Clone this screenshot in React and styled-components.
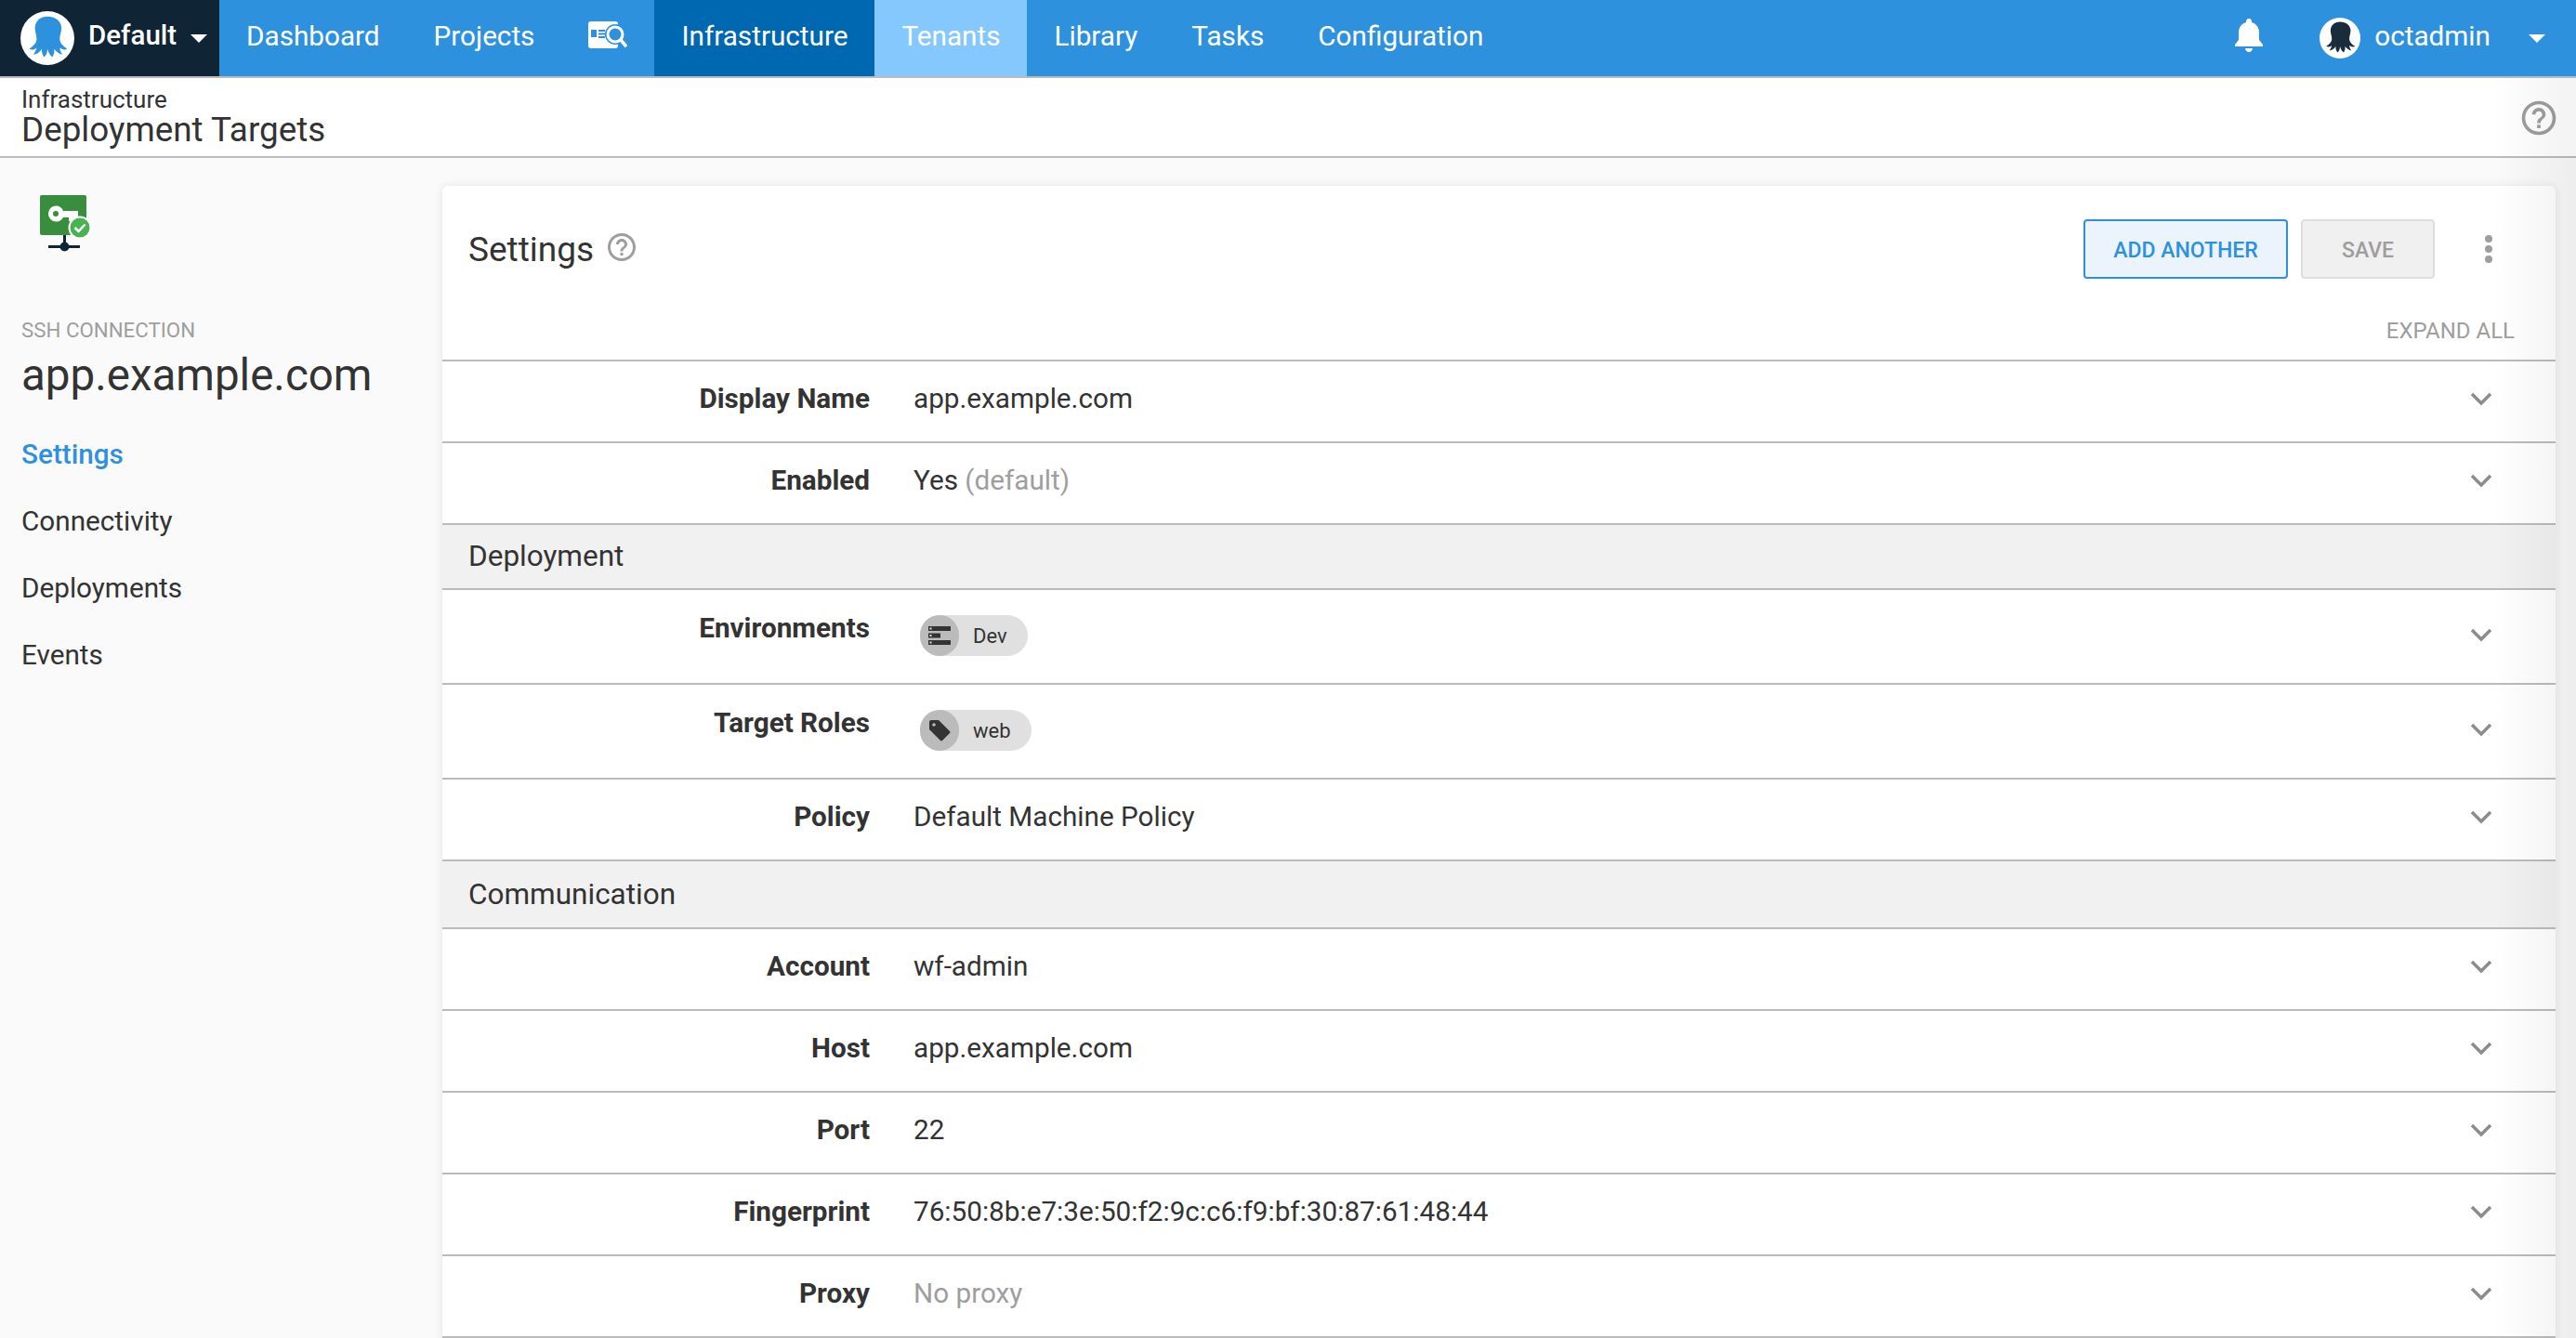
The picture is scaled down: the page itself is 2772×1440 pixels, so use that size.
import React from 'react';
import styled, { createGlobalStyle } from 'styled-components';

const GlobalStyle = createGlobalStyle`
  html, body {
    margin: 0;
    height: 1440px;
    overflow: hidden;
    background: #fafafa;
    font-family: Roboto, "Liberation Sans", sans-serif;
    color: #333;
  }
`;

const Page = styled.div`
  position: relative;
  width: 2772px;
  height: 1440px;
  overflow: hidden;
  display: flex;
  flex-direction: column;
`;

const EdgeShade = styled.div`
  position: absolute;
  top: 84px;
  right: 0;
  bottom: 0;
  width: 90px;
  background: linear-gradient(to right, rgba(0, 0, 0, 0), rgba(0, 0, 0, 0.05));
  pointer-events: none;
`;

const NavBar = styled.nav`
  display: flex;
  height: 84px;
  flex: none;
  box-sizing: border-box;
  background: #2e91de;
  border-bottom: 2px solid #bbb;
`;

const SpaceSwitcher = styled.div`
  width: 236px;
  flex: none;
  display: flex;
  align-items: center;
  padding-left: 22px;
  box-sizing: border-box;
  background: #0f2535;
  color: #fff;
  font-size: 29.5px;
  font-weight: 500;
`;

const SpaceName = styled.span`
  margin: 0 0 6px 15px;
`;

const NavItem = styled.div`
  display: flex;
  align-items: center;
  padding: 0 29px 6px;
  font-size: 29.7px;
  color: #fff;
  background: ${({ $state }) =>
    $state === 'active' ? '#0067b1' : $state === 'hover' ? '#85c8fe' : 'transparent'};
`;

const NavRight = styled.div`
  margin-left: auto;
  display: flex;
  align-items: center;
  color: #fff;
  font-size: 29.7px;
`;

const Bell = styled.svg`
  width: 30px;
  height: 36px;
  margin: 0 61px 7px 0;
`;

const UserName = styled.span`
  margin: 0 0 6px 15px;
`;

const Avatar = styled.svg`
  width: ${({ $size }) => $size}px;
  height: ${({ $size }) => $size}px;
  flex: none;
`;

const Caret = styled.span`
  width: 0;
  height: 0;
  border-left: 9px solid transparent;
  border-right: 9px solid transparent;
  border-top: 9px solid #fff;
  margin-left: ${({ $gap }) => $gap}px;
  margin-right: ${({ $end }) => $end}px;
`;

const PageHeader = styled.header`
  height: 86px;
  flex: none;
  box-sizing: border-box;
  background: #fff;
  border-bottom: 2px solid #bbb;
  padding: 2px 18px 0 23px;
  display: flex;
  justify-content: space-between;
  align-items: center;
`;

const Crumb = styled.div`
  font-size: 26px;
  line-height: 26px;
`;

const PageTitle = styled.div`
  font-size: 36.8px;
  line-height: 40px;
`;

const Body = styled.div`
  flex: 1;
  display: flex;
  min-height: 0;
`;

const Sidebar = styled.aside`
  width: 476px;
  flex: none;
  box-sizing: border-box;
  padding: 40px 0 0 23px;
`;

const TargetIcon = styled.svg`
  display: block;
  width: 56px;
  height: 62px;
  margin-left: 20px;
`;

const Eyebrow = styled.div`
  margin-top: 70px;
  font-size: 22.3px;
  line-height: 26px;
  color: #9e9e9e;
`;

const TargetName = styled.div`
  margin-top: 6px;
  font-size: 47.5px;
  line-height: 60px;
`;

const SideNav = styled.div`
  margin-top: 19px;
  display: flex;
  flex-direction: column;
`;

const SideLink = styled.div`
  height: 72px;
  line-height: 72px;
  font-size: 29.7px;
  font-weight: ${({ $active }) => ($active ? 500 : 400)};
  color: ${({ $active }) => ($active ? '#2e91de' : '#333')};
`;

const Card = styled.main`
  width: 2274px;
  flex: none;
  margin-top: 30px;
  background: #fff;
  border-radius: 6px 6px 0 0;
  box-shadow: 0 0 10px rgba(0, 0, 0, 0.1);
  align-self: flex-start;
`;

const CardHeader = styled.div`
  height: 136px;
  display: flex;
  align-items: center;
  padding: 0 0 0 28px;
`;

const CardTitle = styled.h2`
  margin: 0;
  font-size: 37px;
  font-weight: 400;
`;

const HelpIcon = styled.svg`
  width: ${({ $size }) => $size}px;
  height: ${({ $size }) => $size}px;
  margin-left: ${({ $gap }) => $gap || 0}px;
  margin-bottom: ${({ $lift }) => $lift || 0}px;
  flex: none;
`;

const Actions = styled.div`
  margin-left: auto;
  display: flex;
  align-items: center;
  gap: 14px;
`;

const Button = styled.div`
  height: 64px;
  width: ${({ $width }) => $width}px;
  box-sizing: border-box;
  display: flex;
  align-items: center;
  justify-content: center;
  padding-top: 2px;
  border-radius: 4px;
  font-size: 23px;
  font-weight: 500;
  color: ${({ $primary }) => ($primary ? '#2e91de' : '#9e9e9e')};
  background: ${({ $primary }) => ($primary ? '#ebf4fc' : '#f0f0f0')};
  border: 2px solid ${({ $primary }) => ($primary ? '#2e91de' : '#dedede')};
`;

const Dots = styled.svg`
  width: 10px;
  height: 30px;
  margin: 0 67px 0 53px;
`;

const ExpandBar = styled.div`
  height: 51px;
  box-sizing: border-box;
  padding: 0 44px 0 0;
  text-align: right;
  font-size: 24px;
  line-height: 40px;
  color: #9e9e9e;
`;

const Row = styled.div`
  display: flex;
  align-items: ${({ $top }) => ($top ? 'flex-start' : 'center')};
  height: ${({ $tall }) => ($tall ? 102 : 88)}px;
  box-sizing: border-box;
  border-top: 2px solid #bbb;
  padding-bottom: ${({ $top }) => ($top ? 0 : 7)}px;
  position: relative;
`;

const Label = styled.div`
  width: 460px;
  flex: none;
  text-align: right;
  font-size: 29.7px;
  font-weight: 700;
  padding-top: ${({ $top }) => ($top ? 23 : 0)}px;
`;

const Value = styled.div`
  margin-left: 47px;
  font-size: 29.7px;
  color: ${({ $muted }) => ($muted ? '#9e9e9e' : '#333')};
`;

const Muted = styled.span`
  color: #9e9e9e;
`;

const Chevron = styled.svg`
  position: absolute;
  left: 2182px;
  top: ${({ $tall }) => ($tall ? 41 : 33)}px;
  width: 24px;
  height: 15px;
`;

const Chip = styled.div`
  margin: 27px 0 0 54px;
  height: 44px;
  width: ${({ $width }) => $width}px;
  display: flex;
  align-items: center;
  border-radius: 22px;
  background: #e0e0e0;
  font-size: 22px;
`;

const ChipIcon = styled.div`
  width: 42px;
  height: 44px;
  border-radius: 22px;
  background: #bbb;
  display: flex;
  align-items: center;
  justify-content: center;
  margin-right: 15px;
  flex: none;
`;

const SectionRow = styled.div`
  height: ${({ $height }) => $height}px;
  box-sizing: border-box;
  display: flex;
  align-items: center;
  padding: 0 0 1px 28px;
  font-size: 31.5px;
  background: #f1f1f1;
  border-top: 2px solid #bbb;
`;

const Octopus = ({ size, color }) => (
  <Avatar $size={size} viewBox="0 0 60 60">
    <circle cx="30" cy="30" r="30" fill="#fff" />
    <path
      fill={color}
      transform="translate(2.4 0.5) scale(.92)"
      d="M30 6c-9 0-15 6-15 14 0 5 2 9 2 13 0 5-4 9-9 12 3 2 7 1 9-1-1 4-3 7-4 8 4 0 8-3 10-7 0 4 1 7 3 10 3-2 4-6 4-10 1 4 3 8 6 10 2-3 3-7 2-10 3 4 6 6 10 7-1-2-3-5-3-8 3 2 6 3 9 1-5-3-9-7-9-12 0-5 2-8 2-13 0-8-7-14-17-14z"
    />
  </Avatar>
);

const Help = ({ size, gap, lift }) => (
  <HelpIcon $size={size} $gap={gap} $lift={lift} viewBox="0 0 24 24">
    <path
      fill="#9e9e9e"
      d="M11 18h2v-2h-2v2zm1-16C6.48 2 2 6.48 2 12s4.48 10 10 10 10-4.48 10-10S17.52 2 12 2zm0 18c-4.41 0-8-3.59-8-8s3.59-8 8-8 8 3.59 8 8-3.59 8-8 8zm0-14c-2.21 0-4 1.79-4 4h2c0-1.1.9-2 2-2s2 .9 2 2c0 2-3 1.75-3 5h2c0-2.25 3-2.5 3-5 0-2.21-1.79-4-4-4z"
    />
  </HelpIcon>
);

const Chev = ({ tall }) => (
  <Chevron $tall={tall} viewBox="0 0 24 15">
    <path d="M2 2l10 10L22 2" fill="none" stroke="#8c8c8c" strokeWidth="3.5" />
  </Chevron>
);

const Field = ({ label, children, muted }) => (
  <Row>
    <Label>{label}</Label>
    <Value $muted={muted}>{children}</Value>
    <Chev />
  </Row>
);

const ChipField = ({ label, text, width, icon }) => (
  <Row $tall $top>
    <Label $top>{label}</Label>
    <Chip $width={width}>
      <ChipIcon>{icon}</ChipIcon>
      {text}
    </Chip>
    <Chev tall />
  </Row>
);

const navItems = [
  { label: 'Dashboard' },
  { label: 'Projects' },
  { icon: true },
  { label: 'Infrastructure', state: 'active' },
  { label: 'Tenants', state: 'hover' },
  { label: 'Library' },
  { label: 'Tasks' },
  { label: 'Configuration' },
];

export default function App() {
  return (
    <Page>
      <GlobalStyle />
      <NavBar>
        <SpaceSwitcher>
          <Octopus size={58} color="#2e91de" />
          <SpaceName>Default</SpaceName>
          <Caret $gap={15} $end={0} />
        </SpaceSwitcher>
        {navItems.map((item, i) => (
          <NavItem key={i} $state={item.state}>
            {item.icon ? (
              <svg width="42" height="30" viewBox="2 0 42 30">
                <rect x="2" y="0" width="32" height="29" rx="3" fill="#fff" />
                <rect x="5" y="9" width="6" height="8" fill="#2e91de" />
                <rect x="13" y="9" width="7" height="2" fill="#2e91de" />
                <rect x="13" y="12.500" width="7" height="2" fill="#2e91de" />
                <rect x="13" y="16" width="7" height="2" fill="#2e91de" />
                <circle cx="31" cy="14" r="11" fill="#2e91de" />
                <circle cx="31" cy="14" r="8" fill="#2e91de" stroke="#fff" strokeWidth="3" />
                <path d="M37 20l6 7" stroke="#fff" strokeWidth="3.500" />
              </svg>
            ) : (
              item.label
            )}
          </NavItem>
        ))}
        <NavRight>
          <Bell viewBox="0 0 30 36">
            <path fill="#fff" d="M15 0c-1.700 0-3 1.300-3 3v1C7 5.500 4 9.500 4 15v8l-4 5v2h30v-2l-4-5v-8c0-5.500-3-9.500-8-11V3c0-1.700-1.300-3-3-3zM11 32c0 2 2 4 4 4s4-2 4-4z" />
          </Bell>
          <Octopus size={44} color="#1a2c3c" />
          <UserName>octadmin</UserName>
          <Caret $gap={41} $end={33} />
        </NavRight>
      </NavBar>
      <PageHeader>
        <div>
          <Crumb>Infrastructure</Crumb>
          <PageTitle>Deployment Targets</PageTitle>
        </div>
        <Help size={44} />
      </PageHeader>
      <Body>
        <Sidebar>
          <TargetIcon viewBox="0 0 56 62">
            <rect x="0" y="0" width="50" height="43" rx="2" fill="#388e3c" />
            <path fill="#fff" d="M17 11.500a8.500 8.500 0 0 1 8 5.500H41v7h-4v4h-6v-4h-6a8.500 8.500 0 1 1-8-12.500z" />
            <circle cx="17" cy="20" r="3" fill="#388e3c" />
            <rect x="25" y="43" width="3" height="12" fill="#0f2535" />
            <rect x="9" y="54" width="34" height="3" fill="#0f2535" />
            <circle cx="26.500" cy="55.500" r="5" fill="#0f2535" />
            <circle cx="43" cy="35" r="12.500" fill="#fff" />
            <circle cx="43" cy="35" r="10.500" fill="#48b350" />
            <path d="M37.500 35l4 4 7-7.500" fill="none" stroke="#fff" strokeWidth="2.500" />
          </TargetIcon>
          <Eyebrow>SSH CONNECTION</Eyebrow>
          <TargetName>app.example.com</TargetName>
          <SideNav>
            <SideLink $active>Settings</SideLink>
            <SideLink>Connectivity</SideLink>
            <SideLink>Deployments</SideLink>
            <SideLink>Events</SideLink>
          </SideNav>
        </Sidebar>
        <Card>
          <CardHeader>
            <CardTitle>Settings</CardTitle>
            <Help size={36} gap={12} lift={5} />
            <Actions>
              <Button $primary $width={220}>ADD ANOTHER</Button>
              <Button $width={144}>SAVE</Button>
            </Actions>
            <Dots viewBox="0 0 10 30">
              <circle cx="5" cy="4" r="4" fill="#9e9e9e" />
              <circle cx="5" cy="15" r="4" fill="#9e9e9e" />
              <circle cx="5" cy="26" r="4" fill="#9e9e9e" />
            </Dots>
          </CardHeader>
          <ExpandBar>EXPAND ALL</ExpandBar>
          <Field label="Display Name">app.example.com</Field>
          <Field label="Enabled">
            Yes <Muted>(default)</Muted>
          </Field>
          <SectionRow $height={70}>Deployment</SectionRow>
          <ChipField
            label="Environments"
            text="Dev"
            width={116}
            icon={
              <svg width="24" height="20" viewBox="0 0 24 20">
                <rect y="0" width="24" height="5" fill="#333" />
                <rect y="7.500" width="13" height="5" fill="#333" />
                <rect y="15" width="24" height="5" fill="#333" />
                <rect x="1.500" y="1.500" width="2" height="2" fill="#ddd" />
                <rect x="1.500" y="9" width="2" height="2" fill="#ddd" />
                <rect x="1.500" y="16.500" width="2" height="2" fill="#ddd" />
              </svg>
            }
          />
          <ChipField
            label="Target Roles"
            text="web"
            width={120}
            icon={
              <svg width="24" height="24" viewBox="0 0 24 24">
                <path fill="#333" d="M1 3a2 2 0 0 1 2-2h8l12 12a1.500 1.500 0 0 1 0 2l-8 8a1.500 1.500 0 0 1-2 0L1 11z" />
                <circle cx="6" cy="6" r="1.800" fill="#bbb" />
              </svg>
            }
          />
          <Field label="Policy">Default Machine Policy</Field>
          <SectionRow $height={73}>Communication</SectionRow>
          <Field label="Account">wf-admin</Field>
          <Field label="Host">app.example.com</Field>
          <Field label="Port">22</Field>
          <Field label="Fingerprint">76:50:8b:e7:3e:50:f2:9c:c6:f9:bf:30:87:61:48:44</Field>
          <Field label="Proxy" muted>No proxy</Field>
          <Row />
        </Card>
      </Body>
      <EdgeShade />
    </Page>
  );
}
